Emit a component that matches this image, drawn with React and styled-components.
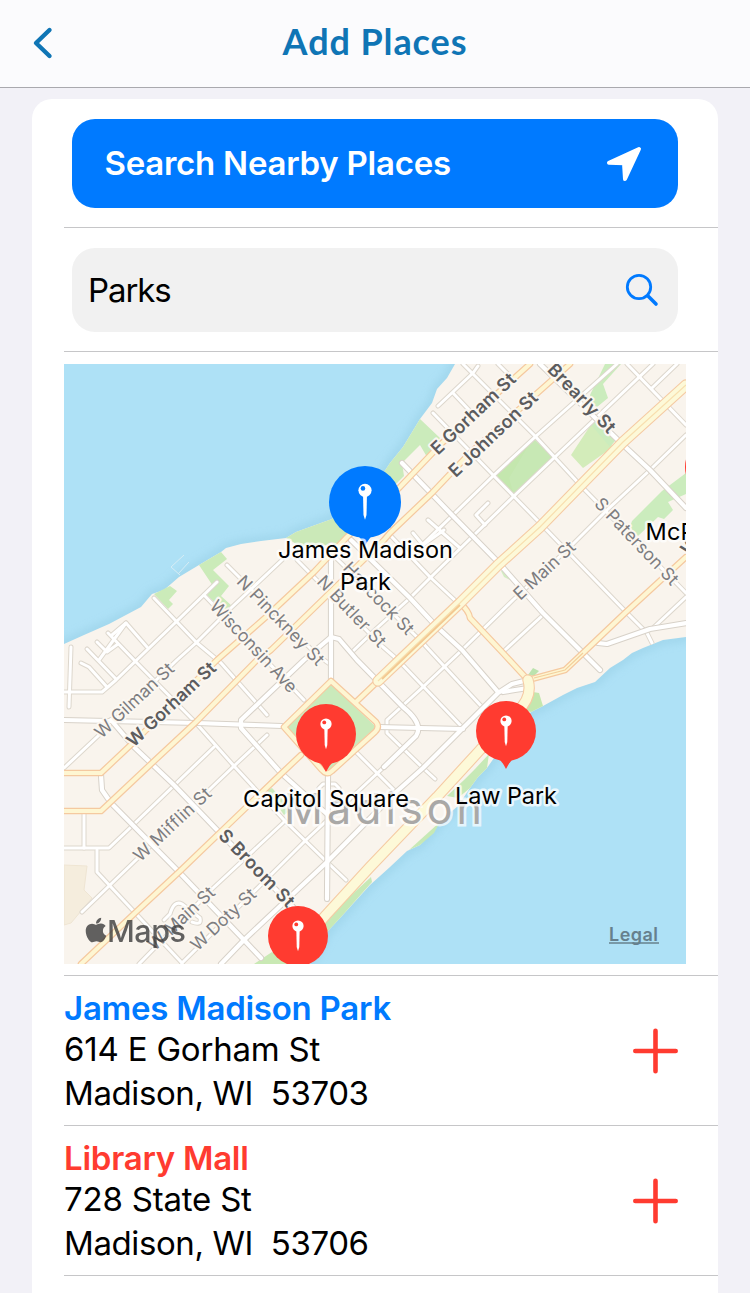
import React from 'react';
import styled, { createGlobalStyle } from 'styled-components';
import { FaApple } from 'react-icons/fa';

const BLUE = '#007aff';
const RED = '#ff3b30';

const GlobalStyle = createGlobalStyle`
  * { box-sizing: border-box; }
  body {
    margin: 0;
    background: #f2f1f7;
    font-family: Inter, "Liberation Sans", sans-serif;
    color: #000;
  }
`;

const Screen = styled.div`
  width: 750px;
  height: 1293px;
  overflow: hidden;
  display: flex;
  flex-direction: column;
  background: #f2f1f7;
`;

const NavBar = styled.header`
  flex: none;
  height: 88px;
  display: grid;
  grid-template-columns: 100px 1fr 100px;
  align-items: center;
  background: #fbfbfd;
  border-bottom: 1px solid #a9a9ae;
`;

const BackButton = styled.button`
  border: 0;
  padding: 0 0 2px 32px;
  background: none;
  display: flex;
`;

const Title = styled.h1`
  margin: 0;
  padding-bottom: 6px;
  text-align: center;
  font: 700 36px/44px Lato, sans-serif;
  letter-spacing: 0.9px;
  color: #0f75b5;
`;

const Card = styled.main`
  flex: none;
  width: 686px;
  min-height: 1220px;
  margin: 11px 32px 0;
  padding-left: 32px;
  background: #fff;
  border-radius: 20px 20px 0 0;
`;

const Section = styled.section`
  padding: ${({ $pad }) => $pad};
  border-bottom: 1px solid #c6c6c8;
`;

const NearbyButton = styled.button`
  width: 100%;
  height: 89px;
  border: 0;
  border-radius: 23px;
  padding: 0 36px 0 32.5px;
  display: flex;
  align-items: center;
  justify-content: space-between;
  background: ${BLUE};
  color: #fff;
  font: 600 33px/40px Inter, sans-serif;
  letter-spacing: -0.25px;
`;

const ButtonLabel = styled.span`
  padding-bottom: 2px;
`;

const SearchField = styled.div`
  height: 84px;
  border-radius: 23px;
  padding: 0 19px 0 16px;
  display: flex;
  align-items: center;
  justify-content: space-between;
  background: #f1f1f1;
  font-size: 33px;
  letter-spacing: -1.1px;
`;

const MapFrame = styled.svg`
  display: block;
  width: 622px;
  height: 600px;
  font-family: Inter, sans-serif;
`;

const StreetLabel = styled.text`
  font-size: ${({ $bold }) => ($bold ? 18 : 17.5)}px;
  font-weight: ${({ $bold }) => ($bold ? 600 : 400)};
  fill: ${({ $bold }) => ($bold ? '#5c5c5e' : '#7d7d80')};
  stroke: #fbf7f1;
  stroke-width: 4px;
  stroke-linejoin: round;
  paint-order: stroke;
  text-anchor: middle;
  dominant-baseline: central;
`;

const PlaceLabel = styled.text`
  font-size: 23.5px;
  fill: #000;
  stroke: rgba(255, 255, 255, 0.75);
  stroke-width: 5px;
  stroke-linejoin: round;
  paint-order: stroke;
`;

const CityLabel = styled.text`
  font-size: 43px;
  font-weight: 400;
  fill: #a9a8a6;
  stroke: rgba(255, 255, 255, 0.7);
  stroke-width: 5px;
  paint-order: stroke;
`;

const PlaceRow = styled.article`
  height: 150px;
  padding: 11px 40px 0 0;
  display: flex;
  justify-content: space-between;
  border-bottom: 1px solid #c6c6c8;
`;

const PlaceName = styled.h2`
  margin: 0;
  font-size: 33px;
  line-height: 42px;
  font-weight: 600;
  letter-spacing: ${({ $track }) => $track}px;
  color: ${({ $color }) => $color};
`;

const AddressLine = styled.div`
  font-size: 33px;
  line-height: ${({ $lh }) => $lh}px;
  letter-spacing: ${({ $track }) => $track}px;
  white-space: pre;
`;

const AddButton = styled.button`
  border: 0;
  padding: 41px 0 0;
  background: none;
  align-self: flex-start;
  display: flex;
`;

/* Map geometry, in the coordinates of the map's viewBox. */
const LAND =
  'M64 644L84 635L109 624L141 607L152 594L164 590L179 577L199 565L221 552L226 548L241 544L261 541L286 538L296 532L332 519L372 490L390 463L403 447L420 419L432 403L437 389L447 378L455 364H686V637L663 640L643 648L632 653L623 660L610 668L595 682L577 688L563 695L543 706L531 712L510 735L487 768L478 777L470 788L458 806L445 817L420 845L407 851L390 867L370 885L341 917L327 932L310 964H64Z';

const PARKS = [
  ['331,684 376,727 328,771 287,727', '#caeabb'],
  ['533,438 553,457 514,496 496,475', '#c4e7ae'],
  ['592,423 613,447 583,468 571,455', '#d3ecba'],
  ['605,364 621,364 603,384 608,398 597,407 592,404 590,395', '#cbecbd'],
  ['592,421 600,424 615,441 610,447 592,426', '#cbecbd'],
  ['686,473 662,491 632,521 630,527 638,536 658,517 664,519 673,510 668,502 686,494', '#cbecbd'],
  ['420,419 440,438 427,457 420,445 402,463 404,476 380,500 372,490 390,463 403,447', '#cbebbb'],
  ['286,538 296,532 332,519 372,490 362,522 338,545 300,546', '#cbe9b8'],
  ['199,565 221,552 227,559 213,570 229,586 221,596 232,606 225,612 207,595 213,586', '#cbebb9'],
  ['154,594 170,586 177,591 169,600 173,604 168,609', '#cbebb9'],
  ['533,668 539,671 534,676 528,675', '#bce3ae'],
  ['533,692 539,693 543,706 531,712 522,710', '#c4e7ae'],
  ['475,769 489,754 487,768 478,777 470,788 458,798 447,796 464,780', '#c7e9b6'],
  ['420,840 440,822 434,833 420,845 409,850', '#c7e9b6'],
  ['371,877 372,882 341,917 327,932 322,922', '#c7e9b6'],
  ['254,964 272,952 290,964', '#c9e9b4'],
  ['267,790 272,788 284,801 288,812 284,815', '#cbebbd'],
  ['501,571 506,570 510,580 504,577', '#d3edc3'],
];

const MINOR = [
  'M617 364L535 437L493 476L452 516L423 544',
  'M653 364L555 457L513 497L472 537L430 578L410 598L377 628L351 653',
  'M686 435L650 470L607 510L570 547L513 600L462 650L423 687L387 720V733L423 768L435 779',
  'M677 364L652 388M686 597L653 628M543 615L505 650',
  'M384 767L306 840L182 963M284 822L211 890L139 964',
  'M214 747L131 827L109 848H64M267 735L234 766L136 860L82 912',
  'M64 768L97 737L177 660L197 642L231 608L282 560',
  'M217 582L176 622L116 680L102 692H64',
  'M97 850V872L182 963M84 813V848',
  'M154 598L197 643L221 663L267 715',
  'M108 633L136 662L196 723L234 766L284 820L327 862L346 880',
  'M147 647L126 623L99 660M87 649L116 679M97 642L107 652L118 644',
  'M81 663L89 667L107 687M71 647L69 707M112 635L126 623',
  'M227 565L317 655L331 665M204 595L304 700',
  'M297 560L383 647L398 660L463 728M336 558L420 640L443 665L482 707',
  'M390 535L430 577L460 605',
  'M433 413L493 475L537 520L627 613L647 633L652 643',
  'M438 406L473 373L478 366M453 393L470 411M498 364L512 378M463 364L535 436L583 488L686 593',
  'M627 364L686 425M488 503L476 515L485 525M428 520L460 548M413 533L423 545L444 530',
  'M357 753L384 780L397 793M319 788L323 784H335L339 788',
  'M164 920L170 914Q174 900 182 904L200 918Q202 926 192 922',
];

const STREETS = [
  'M64 720L197 723L282 726M378 727L463 729',
  'M331 545V680M328 775L327 899',
  'M331 637L304 660L241 720V728L281 773L311 800L328 815',
  'M331 637L339 639L357 660L403 707Q424 724 416 736L384 767',
  'M528 680L512 684L498 693L463 728L423 768L395 793L327 862L244 940L221 964',
  'M528 688L515 690L503 692',
  'M111 720L134 747L174 785L219 832L294 908',
  'M101 775L102 790L111 803L179 872L244 940L261 958',
  'M351 540L410 598L435 625L462 650L498 692',
  'M402 463L452 515L498 562L543 613L587 657L600 670',
  'M540 364L620 442L650 470L686 508',
  'M598 643L607 644L650 629L686 623',
];

const AVENUES = [
  'M64 773H101L136 740L217 660L266 617L314 572L347 537L400 487L442 443L530 364',
  'M64 811H101L152 763L196 722L257 660L271 650L384 540L390 533L432 493L470 453L570 364',
  'M301 755L282 773L179 872L136 912L81 964',
  'M460 603Q469 611 470 618L503 653L528 680',
  'M528 680L565 670L583 653L625 613L686 557',
  'M331 681L376 722Q380 727 375 732L332 771Q327 776 322 770L284 727Z',
  'M356 702L378 681',
];

const BOULEVARDS = [
  'M686 385L623 442L540 527L498 565L460 603L400 660L378 681',
  'M528 680Q533 697 517 712L480 750L437 797L370 867L326 915L300 945',
];

const STREET_NAMES = [
  ['E Gorham St', 473, 413.5, -43.5, true, 109],
  ['E Johnson St', 493, 434, -43.5, true, 115],
  ['Brearly St', 582, 398, 46, true, 89],
  ['S Paterson St', 637, 541, 46.5, false, 113],
  ['E Main St', 544, 570, -43, false, 77],
  ['Hancock St', 379, 598, 46, false, 93],
  ['N Butler St', 352, 611, 46.5, false, 91],
  ['N Pinckney St', 281, 620, 46, false, 117],
  ['Wisconsin Ave', 254, 646, 47, false, 119],
  ['W Gilman St', 134, 700, -43, false, 101],
  ['W Gorham St', 171, 704, -43, true, 115],
  ['W Mifflin St', 172, 824, -43, false, 99],
  ['S Broom St', 257, 868, 46, true, 100],
  ['W Main St', 181, 918, -43, false, 84],
  ['W Doty St', 223, 919, -43, false, 82],
];

const Roads = ({ paths, casing, casingWidth, fill, width }) => (
  <g fill="none" strokeLinecap="round" strokeLinejoin="round">
    {paths.map((d) => <path key={'c' + d} d={d} stroke={casing} strokeWidth={casingWidth} />)}
    {paths.map((d) => <path key={'f' + d} d={d} stroke={fill} strokeWidth={width} />)}
  </g>
);

const PushPin = ({ color }) => (
  <>
    <circle cy="-10.8" r="6.1" fill="#fff" />
    <path d="M-1.8 -6H1.8L1.4 12L0 16.5L-1.4 12Z" fill="#fff" />
    <circle cx="-1.9" cy="-12.6" r="2.1" fill={color} />
  </>
);

const Marker = ({ x, y, r, color }) => (
  <g transform={`translate(${x} ${y})`}>
    <path d={`M-8 ${r - 3}Q-4 ${r} 0 ${r + 8}Q4 ${r} 8 ${r - 3}Z`} fill={color} />
    <circle r={r} fill={color} />
    <g transform={`scale(${r === 36 ? 1.08 : 0.92})`}><PushPin color={color} /></g>
  </g>
);

function CityMap() {
  return (
    <MapFrame viewBox="64 364 622 600">
      <defs>
        <clipPath id="land"><path d={LAND} /></clipPath>
        <filter id="shore"><feGaussianBlur stdDeviation="4" /></filter>
      </defs>
      <rect x="64" y="364" width="622" height="600" fill="#aee1f6" />
      <path d={LAND} fill="none" stroke="#93cbe2" strokeWidth="8" opacity="0.55" filter="url(#shore)" />
      <path d={LAND} fill="#f9f4ed" />
      <path d="M64 865L87 866L84 890L92 898L71 923L64 925Z" fill="#f5eddd" stroke="#efe5d3" />
      {PARKS.map(([points, fill]) => <polygon key={points} points={points} fill={fill} />)}
      <path d="M533 438L553 457L514 496L509 478Z" fill="#c9eab9" opacity="0.5" />
      <path d="M171 567L180 575M171 567L184 555M178 574L189 562" stroke="#d7edf5" fill="none" />
      <g clipPath="url(#land)">
        <Roads paths={MINOR} casing="#ddd7cd" casingWidth={5} fill="#fff" width={3} />
        <Roads paths={STREETS} casing="#d8d2c9" casingWidth={6.2} fill="#fff" width={4.2} />
        <Roads paths={AVENUES} casing="#f5c9a0" casingWidth={6.6} fill="#fef6d2" width={4.2} />
        <Roads paths={BOULEVARDS} casing="#f5cba4" casingWidth={11.4} fill="#fdf9d8" width={9.2} />
        <path d={BOULEVARDS[0]} fill="none" stroke="#f8dfaf" strokeWidth="1.2" />
        <path d="M460 605L382 679" fill="none" stroke="#f3c991" strokeWidth="1.8" />
        <path d="M534 678L565 670L583 653" fill="none" stroke="#f3cf9c" strokeWidth="1.2" />
      </g>
      {STREET_NAMES.map(([name, x, y, angle, bold, length]) => (
        <StreetLabel key={name} $bold={bold} textLength={length} transform={`translate(${x} ${y}) rotate(${angle})`}>
          {name}
        </StreetLabel>
      ))}
      <StreetLabel $bold transform="translate(690 546) rotate(-43)">W</StreetLabel>
      <CityLabel x="284" y="824" textLength="198">Madison</CityLabel>

      <g fill="#3c3c3c" opacity="0.8">
        <FaApple x="82" y="916" size={28} color="#3c3c3c" />
        <text x="107" y="942" fontSize="30.5" fontWeight="500" textLength="79">Maps</text>
      </g>
      <text x="609" y="941" fontSize="18" fontWeight="600" fill="#66808d" textLength="49">Legal</text>
      <path d="M609 943H659" stroke="#66808d" strokeWidth="1.6" />

      <Marker x={715} y={467} r={30} color={RED} />
      <Marker x={298} y={936} r={30} color={RED} />
      <Marker x={326} y={734} r={30} color={RED} />
      <Marker x={506} y={731} r={30} color={RED} />
      <Marker x={365} y={502} r={36} color={BLUE} />
      <PlaceLabel x="278" y="558" textLength="175">James Madison</PlaceLabel>
      <PlaceLabel x="340" y="590" textLength="51">Park</PlaceLabel>
      <PlaceLabel x="243" y="807" textLength="166">Capitol Square</PlaceLabel>
      <PlaceLabel x="455" y="804" textLength="102">Law Park</PlaceLabel>
      <PlaceLabel x="645.5" y="540" textLength="50">McP</PlaceLabel>
    </MapFrame>
  );
}

const PLACES = [
  { name: 'James Madison Park', street: '614 E Gorham St', city: 'Madison, WI  53703', color: BLUE },
  { name: 'Library Mall', street: '728 State St', city: 'Madison, WI  53706', color: RED },
];

export default function App() {
  return (
    <Screen>
      <GlobalStyle />
      <NavBar>
        <BackButton aria-label="Back">
          <svg width="22" height="34" viewBox="0 0 22 34" fill="none" stroke="#0f75b5" strokeWidth="4.4" strokeLinecap="round" strokeLinejoin="round">
            <path d="M17.5 4L4 17L17.5 30" />
          </svg>
        </BackButton>
        <Title>Add Places</Title>
      </NavBar>
      <Card>
        <Section $pad="20px 40px 19px 8px">
          <NearbyButton>
            <ButtonLabel>Search Nearby Places</ButtonLabel>
            <svg width="36" height="36" viewBox="606 146 36 36" fill="#fff" stroke="#fff" strokeWidth="4" strokeLinejoin="round">
              <path d="M639 149L609 162.8L624 163.2L625 179Z" />
            </svg>
          </NearbyButton>
        </Section>
        <Section $pad="20px 40px 19px 8px">
          <SearchField>
            Parks
            <svg width="34" height="34" viewBox="0 0 34 34" fill="none" stroke={BLUE} strokeLinecap="round">
              <circle cx="14" cy="14" r="11.7" strokeWidth="2.8" />
              <path d="M23 23L31 31" strokeWidth="3.6" />
            </svg>
          </SearchField>
        </Section>
        <Section $pad="12px 0 11px">
          <CityMap />
        </Section>
        {PLACES.map(({ name, street, city, color }) => (
          <PlaceRow key={name}>
            <div>
              <PlaceName $color={color} $track={-0.25}>{name}</PlaceName>
              <AddressLine $lh={41} $track={-0.2}>{street}</AddressLine>
              <AddressLine $lh={46} $track={-0.4}>{city}</AddressLine>
            </div>
            <AddButton aria-label={`Add ${name}`}>
              <svg width="45" height="46" viewBox="0 0 45 46" stroke={RED} strokeWidth="4.6" strokeLinecap="round">
                <path d="M2.3 23H42.7M22.5 2.8V43.2" />
              </svg>
            </AddButton>
          </PlaceRow>
        ))}
      </Card>
    </Screen>
  );
}
